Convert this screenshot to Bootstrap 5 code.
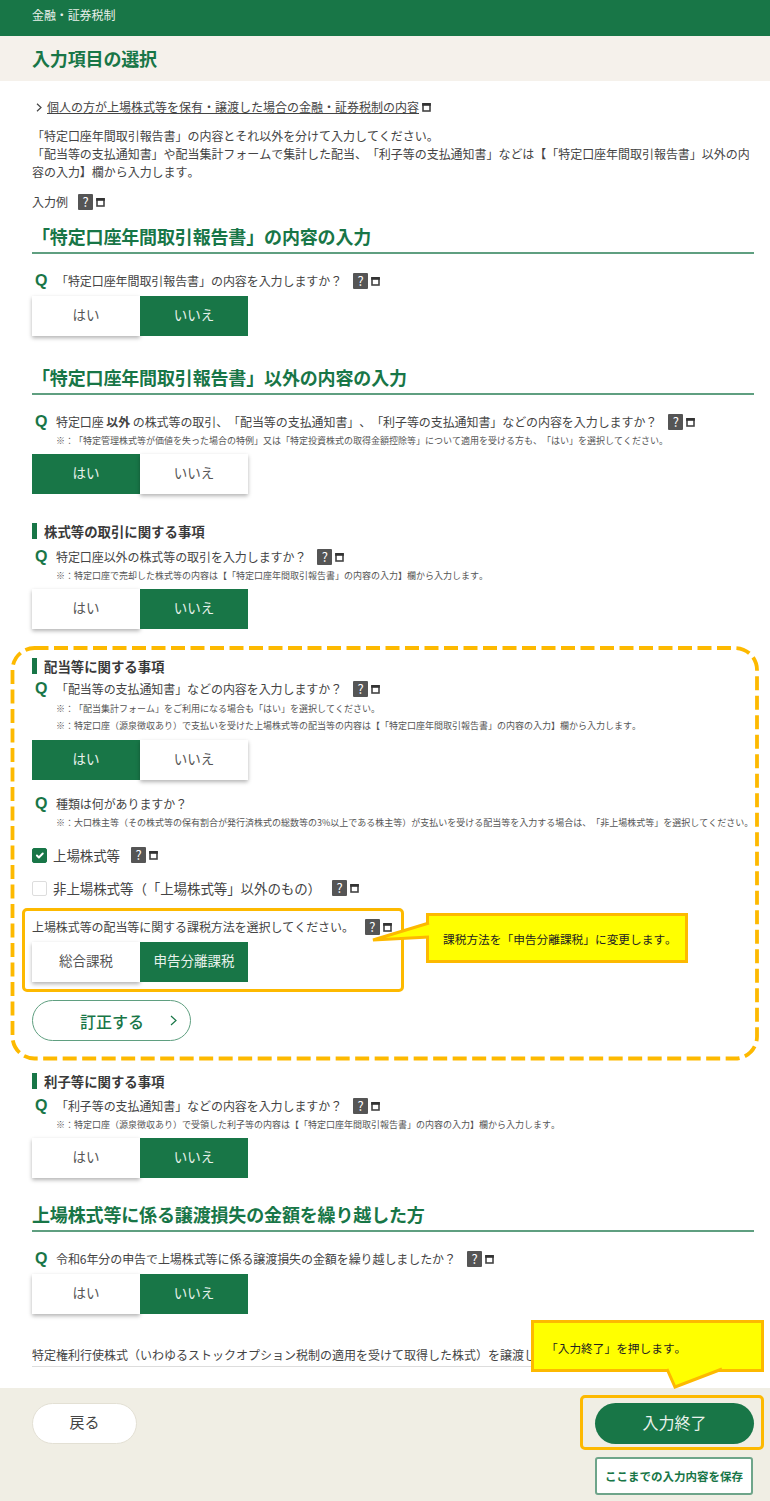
<!DOCTYPE html>
<html lang="ja"><head><meta charset="utf-8">
<title>入力項目の選択</title>
<link rel="stylesheet" href="https://cdn.jsdelivr.net/npm/bootstrap@5.3.0/dist/css/bootstrap.min.css">
<style>
:root{--g:#187647;}
body{font-family:"Noto Sans CJK JP","Liberation Sans",sans-serif;font-size:12px;color:#444;line-height:18px;background:#fff;width:770px;height:1501px;overflow:hidden;position:relative;text-spacing-trim:space-all;font-kerning:none}
.topbar{background:var(--g);color:#e8f0ea;height:36px;padding:6px 32px 0;font-size:12px;letter-spacing:-.1px}
.titleband{background:#f5f1eb;height:45px;padding:10px 32px 0;color:var(--g);font-size:18px;font-weight:700;line-height:24px;letter-spacing:-.15px}
.mainarea{padding:17px 16px 0 32px}
.navlink{height:18px;margin-bottom:11px;display:flex;align-items:center}
.navlink a{color:#444;text-decoration:underline}
.chev{width:6px;height:9px;margin:0 5px 0 4px}
.intro{margin:0 0 12px;font-size:12px;letter-spacing:-.04px}
.exline{height:18px;display:flex;align-items:center}
.sech{color:var(--g);font-weight:700;font-size:18px;line-height:24px;border-bottom:2px solid #5f9f80;margin:0;height:41px;padding-top:11px;letter-spacing:-.15px}
.qline{display:flex;align-items:center;height:18px;font-size:12px;white-space:nowrap;letter-spacing:-.08px}
.qmark{color:var(--g);font-weight:700;font-size:16px;width:15px;margin:0 6px 0 3px;font-family:"Liberation Sans",sans-serif}
.helpq{display:inline-block;width:15px;height:16px;background:#555;color:#fff;font-size:13px;line-height:16px;text-align:center;border-radius:1px;margin-left:11px;font-weight:400;flex:none}
.winic{width:9px;height:10px;margin-left:3px;flex:none}
.notetxt{font-size:9px;line-height:17px;padding-left:24px;white-space:nowrap;color:#555}
.qline + .notetxt{margin-top:1px}
.seg{display:flex;width:216px;height:40px;margin-top:5px}
.qline + .seg{margin-top:8px}
.solidbox .qline + .seg{margin-top:6px}
.seg .btn{width:108px;height:40px;border-radius:0;border:0;font-size:13.5px;padding:0 0 4px;line-height:36px;color:#555;background:#fff;box-shadow:0 2px 4px rgba(0,0,0,.3)}
.seg .btn.onsel{background:var(--g);color:#e9f2ec;box-shadow:none}
.subh{border-left:5px solid var(--g);padding-left:7px;height:16px;line-height:16px;font-weight:700;font-size:13.4px;color:#3a3a3a}
.dashbox{position:relative;margin:19px -1px 0 -20px;padding:10px 20px 0 20px;height:410px;width:745px}
.dashline{position:absolute;left:0;top:0;width:745px;height:410px;pointer-events:none;overflow:visible}
.chk{display:flex;align-items:center;height:18px;font-size:13.5px;white-space:nowrap;margin:0;letter-spacing:-.1px}
.chk .form-check-input{margin:0 6px 0 0;width:15px;height:15px;border-radius:2px;flex:none;border-color:#ddd}
.chk .form-check-input:checked{background-color:var(--g);border-color:var(--g)}
.solidbox{border:3px solid #fdb900;border-radius:5px;width:382px;height:84px;margin:11px 0 0 -10px;padding:7px 0 0 7px}
.fixbtn{width:159px;height:41px;border:1px solid #5f9f80;border-radius:21px;background:#fff;color:var(--g);font-size:16px;font-weight:500;display:flex;align-items:center;margin-top:8px;padding:0 0 0 47px;position:relative}
.fixbtn svg{margin-left:26px;width:7px;height:11px}
.lastline{border-bottom:1px solid #ddd;white-space:nowrap;height:18px;line-height:18px;overflow:hidden;width:722px;margin-top:32px;box-sizing:content-box;padding-bottom:2px}
.pagefoot{position:absolute;left:0;right:0;top:1388px;bottom:0;background:#f0eee4;padding:15px 17px 0 32px;display:flex;justify-content:space-between}
.backbtn{width:105px;height:41px;border:1px solid #e3e0d4;border-radius:21px;background:#fff;color:#444;font-size:15px;padding:0 0 3px;line-height:34px}
.rcol{display:flex;flex-direction:column;width:158px}
.endbtn{width:159px;height:41px;border:0;border-radius:21px;background:var(--g);color:#e9f2ec;font-size:16px;padding:0 0 4px;line-height:32px}
.endwrap{border:3px solid #fdb900;border-radius:5px;margin:-8px -11px 0 -15px;padding:5px 9px 5px 12px;width:184px;height:55px}
.savebtn{margin-top:7px;height:38px;width:158px;border:2px solid #6ea58a;border-radius:3px;background:#fff;color:var(--g);font-size:11.5px;font-weight:700;padding:0;white-space:nowrap;line-height:32px;text-spacing-trim:normal}
.callout{position:absolute;background:#ff0;border:3px solid #fdb900;color:#222;font-size:11.7px;z-index:3;white-space:nowrap;text-spacing-trim:normal}
.tail{position:absolute;z-index:4}
.c1{left:426px;top:913px;width:262px;height:50px;padding:14px 0 0 14px}
.c2{left:531px;top:1320px;width:233px;height:52px;padding:16px 0 0 12px}
</style></head>
<body>
<svg width="0" height="0" class="position-absolute"><defs>
<symbol id="win" viewBox="0 0 9 10"><rect x="1" y="2" width="7" height="7" fill="#fff" stroke="#444" stroke-width="1.6"/><rect x=".2" y="1" width="8.600" height="2.800" fill="#333"/></symbol>
</defs></svg>

<div class="topbar">金融・証券税制</div>
<div class="titleband">入力項目の選択</div>
<main class="mainarea">
  <div class="navlink"><svg class="chev" viewBox="0 0 6 9"><path d="M1 .8 5 4.5 1 8.2" fill="none" stroke="#444" stroke-width="1.2"/></svg><a href="#">個人の方が上場株式等を保有・譲渡した場合の金融・証券税制の内容</a><svg class="winic"><use href="#win"/></svg></div>
  <p class="intro">「特定口座年間取引報告書」の内容とそれ以外を分けて入力してください。<br>「配当等の支払通知書」や配当集計フォームで集計した配当、「利子等の支払通知書」などは【「特定口座年間取引報告書」以外の内容の入力】欄から入力します。</p>
  <div class="exline">入力例<span class="helpq" style="margin-left:10px">?</span><svg class="winic"><use href="#win"/></svg></div>

  <h2 class="sech" style="margin-top:2px">「特定口座年間取引報告書」の内容の入力</h2>
  <div class="qline mt-3 pt-1"><span class="qmark">Q</span>「特定口座年間取引報告書」の内容を入力しますか？<span class="helpq">?</span><svg class="winic"><use href="#win"/></svg></div>
  <div class="seg"><button class="btn">はい</button><button class="btn onsel">いいえ</button></div>

  <h2 class="sech" style="margin-top:18px">「特定口座年間取引報告書」以外の内容の入力</h2>
  <div class="qline" style="margin-top:18px"><span class="qmark">Q</span>特定口座&nbsp;<b>以外</b>&nbsp;の株式等の取引、「配当等の支払通知書」、「利子等の支払通知書」などの内容を入力しますか？<span class="helpq">?</span><svg class="winic"><use href="#win"/></svg></div>
  <div class="notetxt">※：「特定管理株式等が価値を失った場合の特例」又は「特定投資株式の取得金額控除等」について適用を受ける方も、「はい」を選択してください。</div>
  <div class="seg"><button class="btn onsel">はい</button><button class="btn">いいえ</button></div>

  <div class="subh" style="margin-top:29px">株式等の取引に関する事項</div>
  <div class="qline" style="margin-top:9px"><span class="qmark">Q</span>特定口座以外の株式等の取引を入力しますか？<span class="helpq">?</span><svg class="winic"><use href="#win"/></svg></div>
  <div class="notetxt">※：特定口座で売却した株式等の内容は【「特定口座年間取引報告書」の内容の入力】欄から入力します。</div>
  <div class="seg"><button class="btn">はい</button><button class="btn onsel">いいえ</button></div>

  <div class="dashbox">
    <svg class="dashline" viewBox="0 0 745 410"><rect x=".5" y="0" width="744.500" height="410.500" rx="22" fill="none" stroke="#fdb900" stroke-width="3.800" stroke-dasharray="14 5.500"/></svg>
    <div class="subh">配当等に関する事項</div>
    <div class="qline" style="margin-top:6px"><span class="qmark">Q</span>「配当等の支払通知書」などの内容を入力しますか？<span class="helpq">?</span><svg class="winic"><use href="#win"/></svg></div>
    <div class="notetxt" style="margin-top:2px">※：「配当集計フォーム」をご利用になる場合も「はい」を選択してください。</div>
    <div class="notetxt">※：特定口座（源泉徴収あり）で支払いを受けた上場株式等の配当等の内容は【「特定口座年間取引報告書」の内容の入力】欄から入力します。</div>
    <div class="seg" style="margin-top:6px"><button class="btn onsel">はい</button><button class="btn">いいえ</button></div>
    <div class="qline" style="margin-top:15px"><span class="qmark">Q</span>種類は何がありますか？</div>
    <div class="notetxt">※：大口株主等（その株式等の保有割合が発行済株式の総数等の3%以上である株主等）が支払いを受ける配当等を入力する場合は、「非上場株式等」を選択してください。</div>
    <label class="chk form-check" style="padding:0;margin-top:15px;min-height:0"><input class="form-check-input" type="checkbox" checked>上場株式等<span class="helpq">?</span><svg class="winic"><use href="#win"/></svg></label>
    <label class="chk form-check" style="padding:0;margin-top:15px;min-height:0"><input class="form-check-input" type="checkbox">非上場株式等（「上場株式等」以外のもの）<span class="helpq">?</span><svg class="winic"><use href="#win"/></svg></label>
    <div class="solidbox">
      <div class="qline">上場株式等の配当等に関する課税方法を選択してください。<span class="helpq">?</span><svg class="winic"><use href="#win"/></svg></div>
      <div class="seg"><button class="btn">総合課税</button><button class="btn onsel">申告分離課税</button></div>
    </div>
    <button class="fixbtn">訂正する<svg viewBox="0 0 7 11"><path d="M1 1 6 5.5 1 10" fill="none" stroke="#187647" stroke-width="1.2"/></svg></button>
  </div>

  <div class="subh" style="margin-top:15px">利子等に関する事項</div>
  <div class="qline" style="margin-top:8px"><span class="qmark">Q</span>「利子等の支払通知書」などの内容を入力しますか？<span class="helpq">?</span><svg class="winic"><use href="#win"/></svg></div>
  <div class="notetxt">※：特定口座（源泉徴収あり）で受領した利子等の内容は【「特定口座年間取引報告書」の内容の入力】欄から入力します。</div>
  <div class="seg"><button class="btn">はい</button><button class="btn onsel">いいえ</button></div>

  <h2 class="sech" style="margin-top:13px">上場株式等に係る譲渡損失の金額を繰り越した方</h2>
  <div class="qline" style="margin-top:18px"><span class="qmark">Q</span>令和6年分の申告で上場株式等に係る譲渡損失の金額を繰り越しましたか？<span class="helpq">?</span><svg class="winic"><use href="#win"/></svg></div>
  <div class="seg" style="margin-top:6px"><button class="btn">はい</button><button class="btn onsel">いいえ</button></div>
  <div class="lastline">特定権利行使株式（いわゆるストックオプション税制の適用を受けて取得した株式）を譲渡し</div>
</main>

<footer class="pagefoot">
  <button class="btn backbtn">戻る</button>
  <div class="rcol">
    <div class="endwrap"><button class="btn endbtn">入力終了</button></div>
    <button class="btn savebtn">ここまでの入力内容を保存</button>
  </div>
</footer>

<div class="callout c1">課税方法を「申告分離課税」に変更します。</div>
<svg class="tail" style="left:370px;top:918px" width="62" height="26" viewBox="0 0 62 26"><path d="M59 5 3 22 59 19Z" fill="#ff0"/><path d="M59 5 3 22 59 19" fill="none" stroke="#fdb900" stroke-width="3"/></svg>
<div class="callout c2">「入力終了」を押します。</div>
<svg class="tail" style="left:662px;top:1367px" width="68" height="24" viewBox="0 0 68 24"><path d="M4 0 13 20 66 0Z" fill="#ff0"/><path d="M5 2 13 20 60 2" fill="none" stroke="#fdb900" stroke-width="3"/></svg>
<script src="https://cdn.jsdelivr.net/npm/bootstrap@5.3.0/dist/js/bootstrap.bundle.min.js"></script>
</body></html>
